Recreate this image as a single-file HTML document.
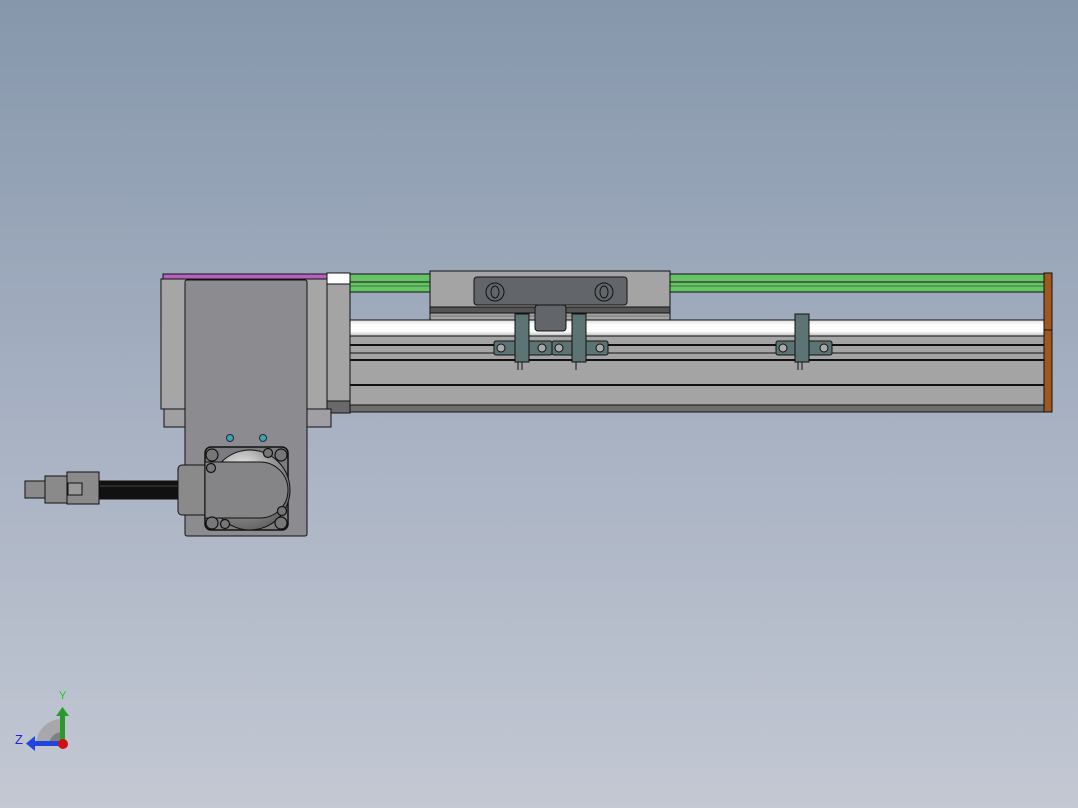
<!DOCTYPE html>
<html><head><meta charset="utf-8"><style>
html,body{margin:0;padding:0;width:1078px;height:808px;overflow:hidden}
body{background:linear-gradient(#8697ab 0%,#a3aec0 45%,#c3c8d3 100%)}
svg{position:absolute;left:0;top:0}
text{font-family:"Liberation Sans",sans-serif}
</style></head><body>
<svg width="1078" height="808" viewBox="0 0 1078 808" stroke="#111" stroke-width="1">
<defs>
<linearGradient id="sh" x1="0" y1="0" x2="0" y2="1"><stop offset="0" stop-color="#ddd"/><stop offset=".3" stop-color="#fff"/><stop offset=".7" stop-color="#fff"/><stop offset="1" stop-color="#bbb"/></linearGradient>
<radialGradient id="fl" cx=".4" cy=".3" r=".8"><stop offset="0" stop-color="#fff"/><stop offset=".5" stop-color="#999"/><stop offset="1" stop-color="#555"/></radialGradient>
</defs>
<!-- green rails -->
<rect x="350" y="274" width="695" height="18" fill="#66c466"/>
<line x1="350" y1="282" x2="1045" y2="282"/><line x1="350" y1="286" x2="1045" y2="286" stroke="#3a7a3a"/>
<!-- shaft -->
<rect x="350" y="320" width="695" height="16" fill="url(#sh)"/>
<!-- profile -->
<rect x="350" y="336" width="695" height="76" fill="#a4a4a4"/>
<line x1="350" y1="345" x2="1045" y2="345" stroke-width="2"/>
<line x1="350" y1="353" x2="1045" y2="353"/>
<line x1="350" y1="360" x2="1045" y2="360" stroke-width="2"/>
<line x1="350" y1="385" x2="1045" y2="385" stroke-width="2"/>
<rect x="350" y="405" width="695" height="7" fill="#6e6e6e"/>
<!-- end cap -->
<rect x="1044" y="273" width="8" height="139" fill="#a0581e"/>
<line x1="1044" y1="330" x2="1052" y2="330"/>
<!-- carriage -->
<rect x="430" y="271" width="240" height="49" fill="#a4a4a4"/>
<rect x="430" y="307" width="240" height="6" fill="#555"/>
<line x1="430" y1="316" x2="670" y2="316" stroke="#777"/>
<rect x="474" y="277" width="153" height="28" rx="3" fill="#62666a"/>
<ellipse cx="495" cy="292" rx="9" ry="9" fill="#62666a"/><ellipse cx="495" cy="292" rx="4" ry="6" fill="none"/>
<ellipse cx="604" cy="292" rx="9" ry="9" fill="#62666a"/><ellipse cx="604" cy="292" rx="4" ry="6" fill="none"/>
<rect x="535" y="305" width="31" height="26" rx="3" fill="#62666a"/>
<!-- sensors -->
<g fill="#5c7474">
<rect x="494" y="341" width="58" height="14" rx="2"/><rect x="552" y="341" width="56" height="14" rx="2"/><rect x="776" y="341" width="56" height="14" rx="2"/>
<rect x="515" y="314" width="14" height="48"/><rect x="572" y="314" width="14" height="48"/><rect x="795" y="314" width="14" height="48"/>
</g>
<g fill="#aaa"><circle cx="501" cy="348" r="4"/><circle cx="542" cy="348" r="4"/><circle cx="559" cy="348" r="4"/><circle cx="600" cy="348" r="4"/><circle cx="783" cy="348" r="4"/><circle cx="824" cy="348" r="4"/></g>
<path d="M518 362v8M522 362v8M576 362v8M798 362v8M802 362v8" fill="none"/>
<!-- white/grey end block -->
<rect x="327" y="273" width="23" height="140" fill="#a4a4a4"/>
<rect x="327" y="273" width="23" height="11" fill="#fff"/>
<rect x="327" y="401" width="23" height="12" fill="#6a6a6a"/>
<!-- left housing -->
<rect x="163" y="274" width="164" height="5" fill="#b860c0"/>
<rect x="161" y="279" width="166" height="130" fill="#a6a6a6"/>
<rect x="164" y="409" width="21" height="18" fill="#a0a0a4"/>
<rect x="307" y="409" width="24" height="18" fill="#a0a0a4"/>
<rect x="185" y="280" width="122" height="256" rx="2" fill="#8c8c90"/>
<circle cx="230" cy="438" r="3.5" fill="#3fa6a0" stroke="#225"/><circle cx="263" cy="438" r="3.5" fill="#3fa6a0" stroke="#225"/>
<!-- cable & connector -->
<rect x="100" y="481" width="80" height="18" fill="#111"/>
<line x1="100" y1="486" x2="180" y2="486" stroke="#444"/>
<rect x="25" y="481" width="22" height="17" fill="#8a8a8a"/>
<rect x="45" y="476" width="23" height="27" fill="#8a8a8a"/>
<rect x="67" y="472" width="32" height="32" fill="#8a8a8a"/>
<rect x="68" y="483" width="14" height="12" fill="#999"/>
<rect x="178" y="465" width="30" height="50" rx="4" fill="#8a8a8a"/>
<!-- flange -->
<rect x="205" y="447" width="83" height="83" rx="6" fill="#7c7c80" stroke-width="1.5"/>
<circle cx="250" cy="490" r="40" fill="url(#fl)"/>
<path d="M205 462H260A28 28 0 0 1 260 518H205Z" fill="#858588"/>
<g fill="#777" stroke-width="1.2">
<circle cx="212" cy="455" r="6"/><circle cx="281" cy="455" r="6"/><circle cx="212" cy="523" r="6"/><circle cx="281" cy="523" r="6"/>
<circle cx="211" cy="468" r="4.5"/><circle cx="268" cy="453" r="4.5"/><circle cx="282" cy="511" r="4.5"/><circle cx="225" cy="524" r="4.5"/>
</g>
<!-- triad -->
<path d="M36 745A26 26 0 0 1 62 719V745Z" fill="#a8a8ac" stroke="none"/>
<path d="M49 745A13 13 0 0 1 62 732V745Z" fill="#808084" stroke="none"/>
<rect x="60" y="715" width="5" height="30" fill="#2a9a2a" stroke="none"/>
<path d="M56 716L62.5 707L69 716Z" fill="#2a9a2a" stroke="none"/>
<rect x="34" y="741" width="28" height="5" fill="#2244dd" stroke="none"/>
<path d="M35 736L26 743.5L35 751Z" fill="#2244dd" stroke="none"/>
<circle cx="63" cy="744" r="5" fill="#d01010" stroke="none"/>
<text x="59" y="699" font-size="11" fill="#1c1" stroke="none">Y</text>
<text x="15" y="744" font-size="13" fill="#22d" stroke="none">Z</text>
</svg>
</body></html>
